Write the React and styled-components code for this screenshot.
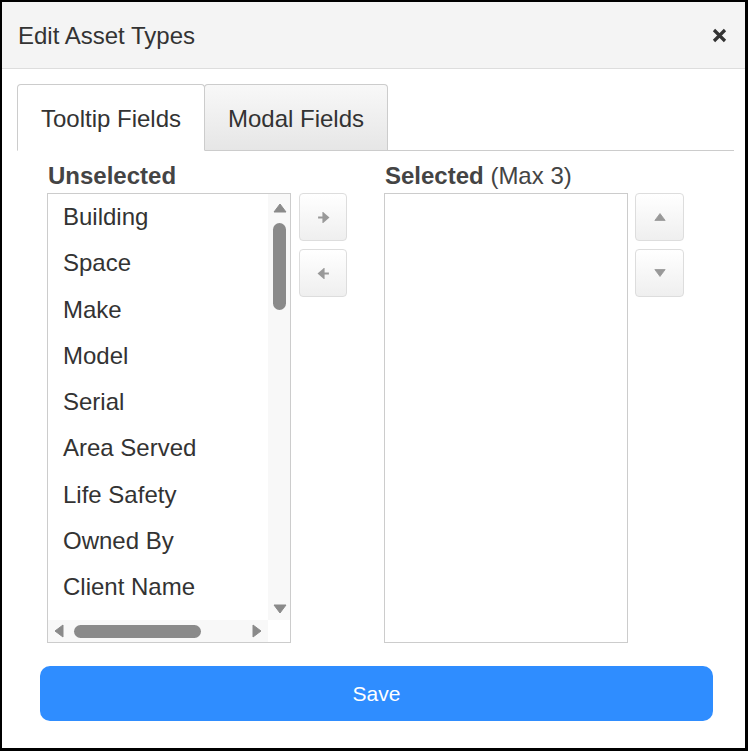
import React from 'react';
import styled, { createGlobalStyle, css } from 'styled-components';

const GlobalStyle = createGlobalStyle`
  html, body {
    margin: 0;
    padding: 0;
    background: #fff;
  }
  * { box-sizing: border-box; }
`;

const Frame = styled.div`
  width: 748px;
  height: 751px;
  border: 2px solid #000;
  border-bottom-width: 3px;
  border-right-width: 3px;
  background: #fff;
  font-family: "Liberation Sans", Arial, sans-serif;
  color: #333;
  display: flex;
  flex-direction: column;
`;

const Header = styled.header`
  height: 67px;
  flex: none;
  background: #f4f4f4;
  border-bottom: 1px solid #ddd;
  display: flex;
  align-items: center;
  justify-content: space-between;
  padding: 1px 18px 0 16px;
`;

const Title = styled.h1`
  margin: 0;
  font-size: 24px;
  font-weight: 400;
  color: #333;
`;

const CloseButton = styled.button`
  border: 0;
  background: none;
  padding: 0;
  width: 16px;
  height: 16px;
  display: flex;
  align-items: center;
  justify-content: center;
  cursor: pointer;
`;

const Body = styled.div`
  padding: 15px 11px 0 15px;
`;

const TabBar = styled.div`
  display: flex;
  border-bottom: 1px solid #ccc;
  height: 67px;
`;

const Tab = styled.div`
  width: ${p => p.$w}px;
  height: 67px;
  display: flex;
  align-items: center;
  justify-content: center;
  font-size: 24px;
  color: #333;
  border: 1px solid #ccc;
  border-radius: 4px 4px 0 0;
  margin-right: -1px;
  padding-top: 2px;
  ${p => p.$active ? css`
    background: #fff;
    border-bottom-color: #fff;
    height: 67px;
    position: relative;
    z-index: 1;
  ` : css`
    background: linear-gradient(#f8f8f8, #e6e6e6);
    border-bottom: 0;
    height: 66px;
  `}
`;

const Panels = styled.div`
  display: flex;
  gap: 37px;
  padding: 12px 0 0 30px;
`;

const Column = styled.div`
  display: flex;
  flex-direction: column;
`;

const Label = styled.div`
  font-size: 24px;
  line-height: 26px;
  color: #444;
  margin-bottom: 4px;
  padding-left: 1px;
  b { font-weight: 700; }
`;

const Row = styled.div`
  display: flex;
  align-items: flex-start;
  gap: ${p => p.$gap}px;
`;

const ListBox = styled.div`
  width: 244px;
  height: 450px;
  border: 1px solid #ccc;
  background: #fff;
  display: grid;
  grid-template-columns: 1fr 22px;
  grid-template-rows: 1fr 22px;
  overflow: hidden;
`;

const EmptyBox = styled.div`
  width: 244px;
  height: 450px;
  border: 1px solid #ccc;
  background: #fff;
`;

const Items = styled.ul`
  list-style: none;
  margin: 0;
  padding: 0;
  overflow: hidden;
`;

const Item = styled.li`
  height: 46.25px;
  display: flex;
  align-items: center;
  padding-left: 15px;
  font-size: 24px;
  color: #333;
  white-space: nowrap;
`;

const VTrack = styled.div`
  background: #f8f8f8;
  display: flex;
  flex-direction: column;
  align-items: center;
  padding: 9px 0 6px 1px;
`;

const VThumb = styled.div`
  width: 13px;
  height: 87px;
  border-radius: 7px;
  background: #8a8a8a;
  margin-top: 10px;
  flex: none;
`;

const HTrack = styled.div`
  background: #f8f8f8;
  display: flex;
  align-items: center;
  padding: 0 6px 0 6px;
`;

const HThumb = styled.div`
  width: 127px;
  height: 13px;
  border-radius: 7px;
  background: #8a8a8a;
  margin-left: 10px;
  flex: none;
`;

const Corner = styled.div`
  background: #fff;
`;

const Spacer = styled.div`
  flex: 1;
`;

const ButtonStack = styled.div`
  display: flex;
  flex-direction: column;
  gap: 8px;
`;

const MoveButton = styled.button`
  width: ${p => p.$w}px;
  height: 48px;
  border: 1px solid #ddd;
  border-radius: 4px;
  background: linear-gradient(#fff, #efefef);
  display: flex;
  align-items: center;
  justify-content: center;
  padding: 0;
  cursor: pointer;
`;

const SaveButton = styled.button`
  margin: 23px 0 0 23px;
  width: 673px;
  height: 55px;
  border: 0;
  border-radius: 10px;
  background: #2f8dff;
  color: #fff;
  font-family: "Liberation Sans", Arial, sans-serif;
  font-size: 21px;
  cursor: pointer;
`;

const Tri = ({ dir, size = 14, color = '#8a8a8a' }) => {
  const pts = {
    up: '1,9 7,1 13,9',
    down: '1,1 7,9 13,1',
    left: '9,1 1,7 9,13',
    right: '1,1 9,7 1,13',
  }[dir];
  const vert = dir === 'up' || dir === 'down';
  return (
    <svg width={vert ? size : 10} height={vert ? 10 : size} viewBox={vert ? '0 0 14 10' : '0 0 10 14'}>
      <polygon points={pts} fill={color} strokeLinejoin="round" stroke={color} strokeWidth="1" />
    </svg>
  );
};

const Arrow = ({ dir }) => (
  <svg width="13" height="11" viewBox="0 0 12 10">
    {dir === 'right' ? (
      <path d="M1 5H8M6 1.5L10 5L6 8.5Z" stroke="#999" strokeWidth="2" fill="#999" />
    ) : (
      <path d="M11 5H4M6 1.5L2 5L6 8.5Z" stroke="#999" strokeWidth="2" fill="#999" />
    )}
  </svg>
);

const fields = ['Building', 'Space', 'Make', 'Model', 'Serial', 'Area Served', 'Life Safety', 'Owned By', 'Client Name'];

export default function App() {
  return (
    <>
      <GlobalStyle />
      <Frame>
        <Header>
          <Title>Edit Asset Types</Title>
          <CloseButton aria-label="Close">
            <svg width="15" height="15" viewBox="0 0 15 15">
              <path d="M2 2L13 13M13 2L2 13" stroke="#333" strokeWidth="3.2" />
            </svg>
          </CloseButton>
        </Header>
        <Body>
          <TabBar>
            <Tab $active $w={188}>Tooltip Fields</Tab>
            <Tab $w={184}>Modal Fields</Tab>
          </TabBar>
          <Panels>
            <Column>
              <Label><b>Unselected</b></Label>
              <Row $gap={8}>
                <ListBox>
                  <Items>
                    {fields.map(f => <Item key={f}>{f}</Item>)}
                  </Items>
                  <VTrack>
                    <Tri dir="up" />
                    <VThumb />
                    <Spacer />
                    <Tri dir="down" />
                  </VTrack>
                  <HTrack>
                    <Tri dir="left" />
                    <HThumb />
                    <Spacer />
                    <Tri dir="right" />
                  </HTrack>
                  <Corner />
                </ListBox>
                <ButtonStack>
                  <MoveButton $w={48}><Arrow dir="right" /></MoveButton>
                  <MoveButton $w={48}><Arrow dir="left" /></MoveButton>
                </ButtonStack>
              </Row>
            </Column>
            <Column>
              <Label><b>Selected</b> (Max 3)</Label>
              <Row $gap={7}>
                <EmptyBox />
                <ButtonStack>
                  <MoveButton $w={49}><Tri dir="up" size={12} color="#999" /></MoveButton>
                  <MoveButton $w={49}><Tri dir="down" size={12} color="#999" /></MoveButton>
                </ButtonStack>
              </Row>
            </Column>
          </Panels>
          <SaveButton>Save</SaveButton>
        </Body>
      </Frame>
    </>
  );
}
